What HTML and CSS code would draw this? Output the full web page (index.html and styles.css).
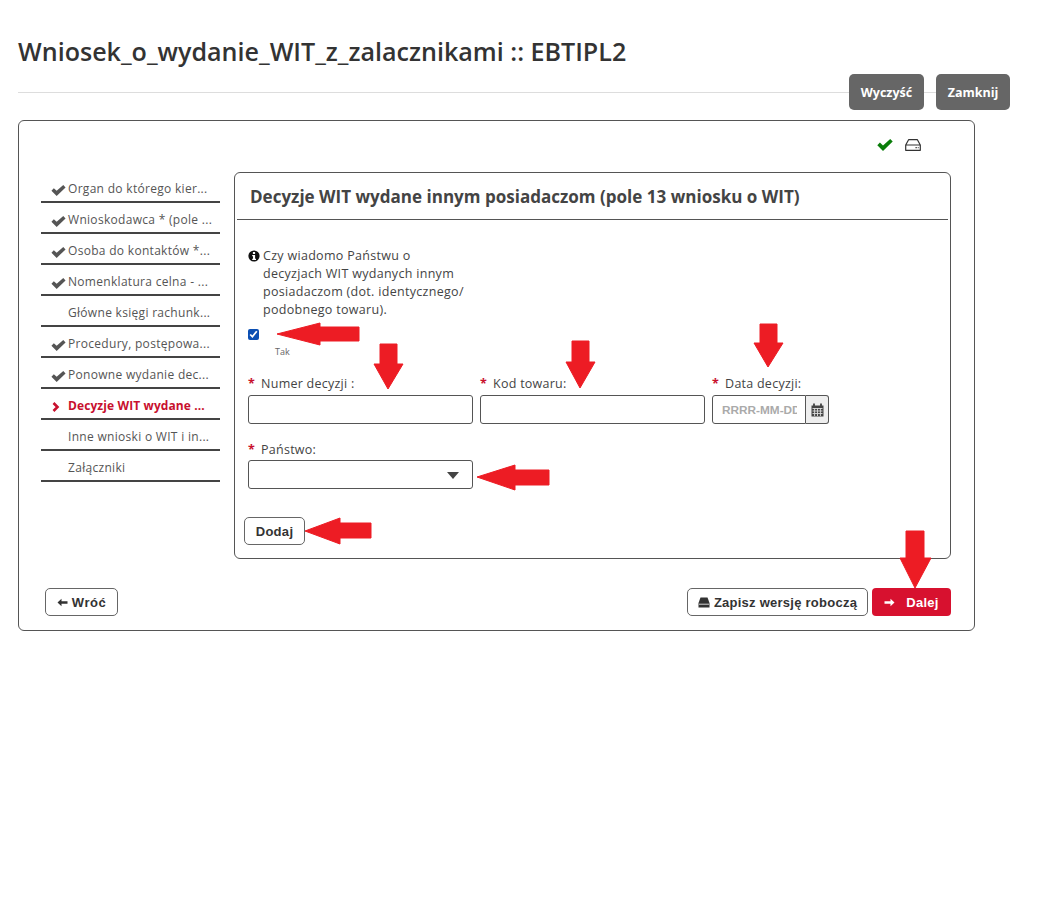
FILE: index.html
```html
<!DOCTYPE html>
<html lang="pl">
<head>
<meta charset="utf-8">
<title>Wniosek</title>
<link rel="stylesheet" href="styles.css">
</head>
<body>
<svg width="0" height="0" class="defs">
  <symbol id="check" viewBox="0 0 16 12"><path d="M0.3 6.3 2.9 3.6 6 6.4 13.2 0 15.7 2.6 6 11.9Z"/></symbol>
</svg>
<div class="page">
  <header class="head">
    <h1 class="title">Wniosek_o_wydanie_WIT_z_zalacznikami :: EBTIPL2</h1>
  </header>
  <div class="topbar">
    <button class="btn-gray">Wyczyść</button>
    <button class="btn-gray">Zamknij</button>
  </div>
  <main class="card">
    <div class="status">
      <svg class="status-ok"><use href="#check"/></svg>
      <svg class="status-drive" viewBox="0 0 16 12"><path d="M3.6 0.7H12.4L15.3 6V11.3H0.7V6ZM0.7 6H15.3" fill="none" stroke="#333" stroke-width="1.2" stroke-linejoin="round"/><path d="M10.5 8.7H11.8M12.8 8.7H13.6" stroke="#333" stroke-width="1.2"/></svg>
    </div>
    <div class="columns">
      <nav class="side">
        <div class="step"><svg class="tick"><use href="#check"/></svg><span>Organ do którego kier...</span></div>
        <div class="step"><svg class="tick"><use href="#check"/></svg><span>Wnioskodawca * (pole ...</span></div>
        <div class="step"><svg class="tick"><use href="#check"/></svg><span>Osoba do kontaktów *...</span></div>
        <div class="step"><svg class="tick"><use href="#check"/></svg><span>Nomenklatura celna - ...</span></div>
        <div class="step"><span>Główne księgi rachunk...</span></div>
        <div class="step"><svg class="tick"><use href="#check"/></svg><span>Procedury, postępowa...</span></div>
        <div class="step"><svg class="tick"><use href="#check"/></svg><span>Ponowne wydanie dec...</span></div>
        <div class="step step-active"><svg class="chev" viewBox="0 0 8 10"><path d="M1.5 1 5.5 5 1.5 9" fill="none" stroke="#c8102e" stroke-width="2.6"/></svg><span>Decyzje WIT wydane ...</span></div>
        <div class="step"><span>Inne wnioski o WIT i in...</span></div>
        <div class="step"><span>Załączniki</span></div>
      </nav>
      <section class="panel">
        <h2 class="panel-title">Decyzje WIT wydane innym posiadaczom (pole 13 wniosku o WIT)</h2>
        <div class="panel-body">
          <div class="question">
            <svg class="info" viewBox="0 0 12 12"><circle cx="6" cy="6" r="5.6" fill="#111"/><rect x="4.9" y="2" width="2.2" height="2" fill="#fff"/><path d="M4.2 5H7.1V8.8H8V10H4.2V8.8H5V6.2H4.2Z" fill="#fff"/></svg>
            <p class="question-text">Czy wiadomo Państwu o decyzjach WIT wydanych innym posiadaczom (dot. identycznego/ podobnego towaru).</p>
          </div>
          <input class="check" type="checkbox" checked>
          <div class="tak">Tak</div>
          <div class="row">
            <div class="field"><label class="lbl"><b>*</b>Numer decyzji :</label><input class="inp" type="text"></div>
            <div class="field"><label class="lbl"><b>*</b>Kod towaru:</label><input class="inp" type="text"></div>
            <div class="field date"><label class="lbl"><b>*</b>Data decyzji:</label>
              <div class="date-group">
                <input class="inp inp-date" type="text" placeholder="RRRR-MM-DD">
                <span class="addon"><svg viewBox="0 0 13 14" width="13" height="14"><path d="M0.5 2.5H12.5V13.5H0.5Z" fill="#444"/><path d="M3 0.5V3M10 0.5V3" stroke="#444" stroke-width="1.8"/><path d="M1.5 5.5H11.5M1.5 8H11.5M1.5 10.5H11.5M3.6 5V13M6.5 5V13M9.4 5V13" stroke="#ddd" stroke-width="0.9"/></svg></span>
              </div>
            </div>
          </div>
          <div class="field country"><label class="lbl"><b>*</b>Państwo:</label>
            <div class="select"><span class="caret"></span></div>
          </div>
          <button class="btn-line btn-add">Dodaj</button>
        </div>
      </section>
    </div>
    <div class="foot">
      <button class="btn-line btn-back"><svg viewBox="0 0 11 9" width="11" height="9"><path d="M0.5 4.5 4.5 0.8V3.2H10.5V5.8H4.5V8.2Z" fill="#333"/></svg>Wróć</button>
      <div class="foot-right">
        <button class="btn-line btn-save"><svg viewBox="0 0 12 11" width="12" height="11"><path d="M2.5 0.5H9.5L11.5 6V10.5H0.5V6Z" fill="#333"/><path d="M1 7.2H11" stroke="#fff" stroke-width="0.8"/></svg>Zapisz wersję roboczą</button>
        <button class="btn-next"><svg viewBox="0 0 11 9" width="11" height="9"><path d="M10.5 4.5 6.5 0.8V3.2H0.5V5.8H6.5V8.2Z" fill="#fff"/></svg>Dalej</button>
      </div>
    </div>
  </main>
</div>
<svg class="arrows" width="1049" height="909" viewBox="0 0 1049 909">
  <polygon points="277,334 320,323 320,327 359,327 359,341 320,341 320,345"/>
  <polygon points="380,344 397,344 397,364 403,364 388,389 374,364 380,364"/>
  <polygon points="572,341 589,341 589,362 595,362 580,388 566,362 572,362"/>
  <polygon points="760,324 777,324 777,343 783,343 768,367 754,343 760,343"/>
  <polygon points="477,477 515,465 515,470 549,470 549,485 515,485 515,490"/>
  <polygon points="305,531 340,518 340,523 371,523 371,538 340,538 340,544"/>
  <polygon points="906,531 924,531 924,558 931,558 915,588 900,558 906,558"/>
</svg>
</body>
</html>
```
FILE: styles.css
```css
* { box-sizing: border-box; }
html, body { margin: 0; padding: 0; }
body { position: relative; background: #fff; color: #444; font-family: "Open Sans", sans-serif; height: 909px; overflow: hidden; }
.defs { position: absolute; }
.page { padding: 0 39px 0 18px; }
.head { height: 93px; border-bottom: 1px solid #ddd; padding-top: 35px; }
.title { margin: 0; font-size: 25.08px; line-height: 33px; font-weight: 600; color: #333; }
.topbar { display: flex; justify-content: flex-end; gap: 12px; margin-top: -19px; height: 36px; position: relative; }
.btn-gray { width: 75px; height: 36px; border: 0; border-radius: 5px; background: #666; color: #fff; font: 700 12.5px "Open Sans", sans-serif; padding: 0; }
.btn-gray + .btn-gray { width: 74px; }
.card { width: 957px; height: 511px; margin-top: 10px; border: 1px solid #555; border-radius: 6px; padding: 0 23px 0 22px; }
.status { height: 51px; display: flex; justify-content: flex-end; align-items: center; gap: 12px; padding: 0 30px 3px 0; }
.status-ok { width: 16px; height: 12px; fill: #0a7d0a; }
.status-drive { width: 16px; height: 12px; }
.columns { display: flex; gap: 14px; }
.side { width: 179px; flex: none; }
.step { height: 31px; border-bottom: 2px solid #444; display: flex; align-items: center; font-size: 12px; color: #555; padding: 4px 0 0 27px; position: relative; letter-spacing: 0.3px; white-space: nowrap; }
.tick { position: absolute; left: 10px; top: 13px; width: 15px; height: 11px; fill: #555; }
.chev { position: absolute; left: 11px; top: 13px; width: 8px; height: 10px; }
.step-active { font-weight: 700; color: #c8102e; letter-spacing: 0.1px; }
.panel { width: 717px; height: 387px; border: 1px solid #555; border-radius: 6px; padding: 0 2px; display: flex; flex-direction: column; }
.panel-title { margin: 0; height: 47px; border-bottom: 1px solid #555; font-size: 17.05px; line-height: 47px; font-weight: 700; color: #444; padding-left: 13px; white-space: nowrap; }
.panel-body { padding: 27px 0 0 11px; position: relative; }
.question { display: flex; gap: 3px; width: 225px; }
.info { width: 12px; height: 12px; flex: none; margin-top: 3px; }
.question-text { margin: 0; width: 208px; font-size: 12.5px; line-height: 18px; font-weight: 500; color: #444; letter-spacing: 0.3px; }
.check { display: block; width: 11px; height: 11px; margin: 10px 0 0; accent-color: #0b4fb3; }
.tak { font-size: 9px; line-height: 12px; color: #666; margin: 6px 0 0 27px; }
.row { display: flex; gap: 7px; margin-top: 15px; }
.row .lbl { height: 22px; }
.field { width: 225px; display: flex; flex-direction: column; }
.date { width: 117px; }
.lbl { display: block; height: 21px; font-size: 12.5px; line-height: 21px; font-weight: 500; color: #444; letter-spacing: 0.25px; white-space: nowrap; }
.lbl b { color: #c8102e; margin-right: 6px; font-weight: 700; }
.inp { display: block; width: 100%; height: 29px; border: 1px solid #555; border-radius: 3px; background: #fff; padding: 0 8px 0 9px; }
.date-group { display: flex; }
.inp-date { width: 94px; border-radius: 3px 0 0 3px; font: 700 11.8px "Liberation Sans", sans-serif; }
.inp-date::placeholder { color: #aaa; opacity: 1; }
.addon { width: 23px; height: 29px; border: 1px solid #555; border-left: 0; border-radius: 0 3px 3px 0; background: #eee; display: flex; align-items: center; justify-content: center; }
.country { margin-top: 15px; }
.select { height: 29px; border: 1px solid #555; border-radius: 3px; position: relative; }
.caret { position: absolute; right: 13px; top: 11px; border: 6px solid transparent; border-top: 7px solid #444; border-bottom: 0; }
.btn-line { border: 1px solid #666; border-radius: 5px; background: #fff; color: #333; font: 700 13px "Liberation Sans", sans-serif; letter-spacing: 0.3px; padding: 0; height: 28px; display: inline-flex; align-items: center; justify-content: center; }
.btn-add { width: 61px; margin: 28px 0 0 -4px; }
.foot { display: flex; justify-content: space-between; margin-top: 29px; padding-left: 4px; }
.btn-back { width: 73px; gap: 4px; letter-spacing: 0.5px; }
.foot-right { display: flex; gap: 4px; }
.btn-save { width: 181px; gap: 4px; letter-spacing: 0.25px; }
.btn-next { width: 79px; height: 28px; border: 0; border-radius: 4px; background: #d7112f; color: #fff; font: 700 13px "Liberation Sans", sans-serif; letter-spacing: 0.3px; display: inline-flex; align-items: center; justify-content: center; gap: 11px; padding: 0; }
.arrows { position: absolute; left: 0; top: 0; pointer-events: none; fill: #ed1c24; stroke: #ed1c24; stroke-width: 1; stroke-linejoin: round; }
```
